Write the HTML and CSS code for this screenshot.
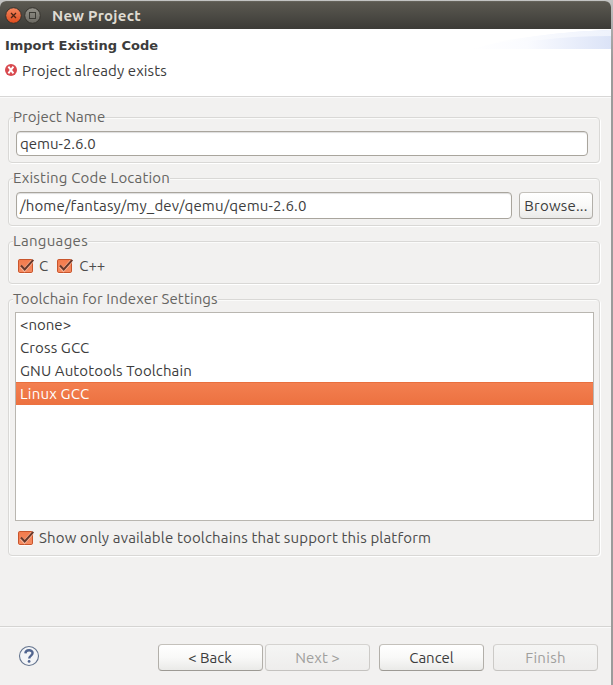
FILE: index.html
```html
<!DOCTYPE html>
<html lang="en">
<head>
<meta charset="utf-8">
<title>New Project</title>
<link rel="stylesheet" href="styles.css">
</head>
<body>
<main class="window">
  <header class="titlebar">
    <svg class="controls" width="36" height="20" viewBox="0 0 36 20">
      <defs>
        <linearGradient id="close" x1="0" y1="0" x2="0" y2="1"><stop offset="0" stop-color="#f58860"/><stop offset="1" stop-color="#df4a1b"/></linearGradient>
        <linearGradient id="max" x1="0" y1="0" x2="0" y2="1"><stop offset="0" stop-color="#94928a"/><stop offset="1" stop-color="#6b6962"/></linearGradient>
      </defs>
      <circle cx="8.5" cy="10.5" r="7.8" fill="url(#close)" stroke="#35332d"/>
      <path d="M6 8l5 5M11 8l-5 5" stroke="#4b2415" stroke-width="1.3"/>
      <circle cx="27.5" cy="10.5" r="7.8" fill="url(#max)" stroke="#35332d"/>
      <rect x="24.5" y="7.5" width="6" height="6" fill="none" stroke="#3b3a34"/>
    </svg>
    <h1 class="title">New Project</h1>
  </header>
  <section class="banner">
    <div>
      <h2 class="heading">Import Existing Code</h2>
      <p class="message">
        <svg class="error" width="12" height="12" viewBox="0 0 12 12"><circle cx="6" cy="6" r="6" fill="#d84a4f"/><path d="M3.4 2.6l5 6.8M8.4 2.6l-5 6.8" stroke="#fff" stroke-width="1.9"/></svg>
        <span class="t-message">Project already exists</span>
      </p>
    </div>
    <svg class="swoosh" width="140" height="20" viewBox="0 0 140 20">
      <defs>
        <linearGradient id="sw"><stop offset="0" stop-color="#fff"/><stop offset=".4" stop-color="#fafbff"/><stop offset="1" stop-color="#dbe3f7"/></linearGradient>
        <linearGradient id="sw2"><stop offset="0" stop-color="#fff"/><stop offset="1" stop-color="#eef2fc"/></linearGradient>
      </defs>
      <path d="M0 20Q60 4 138 1h2v19z" fill="url(#sw)"/>
      <path d="M20 14Q80 3 138 1h2v6Q100 7 70 11z" fill="url(#sw2)"/>
    </svg>
  </section>

  <div class="groups">
    <section class="group name-group">
      <h3 class="legend"><span class="t-name">Project Name</span></h3>
      <div class="field"><span class="t-qemu">qemu-2.6.0</span></div>
    </section>
    <section class="group location-group">
      <h3 class="legend"><span class="t-location">Existing Code Location</span></h3>
      <div class="row">
        <div class="field"><span class="t-path">/home/fantasy/my_dev/qemu/qemu-2.6.0</span></div>
        <button class="button browse"><span class="t-browse">Browse...</span></button>
      </div>
    </section>
    <section class="group language-group">
      <h3 class="legend"><span class="t-lang">Languages</span></h3>
      <div class="checks">
        <label class="check"><svg class="box" width="17" height="17" viewBox="0 0 17 17"><use href="#tick"/></svg><span class="t-c">C</span></label>
        <label class="check"><svg class="box" width="17" height="17" viewBox="0 0 17 17"><use href="#tick"/></svg><span class="t-cpp">C++</span></label>
      </div>
    </section>
    <section class="group toolchain-group">
      <h3 class="legend"><span class="t-tool">Toolchain for Indexer Settings</span></h3>
      <ul class="list">
        <li><span class="t-none">&lt;none&gt;</span></li>
        <li><span class="t-cross">Cross GCC</span></li>
        <li><span class="t-gnu">GNU Autotools Toolchain</span></li>
        <li class="selected"><span class="t-linux">Linux GCC</span></li>
      </ul>
      <label class="check"><svg class="box" width="17" height="17" viewBox="0 0 17 17"><use href="#tick"/></svg><span class="t-show">Show only available toolchains that support this platform</span></label>
    </section>
  </div>

  <footer class="footer">
    <svg class="help" width="22" height="22" viewBox="0 0 22 22">
      <circle cx="11" cy="11" r="9.5" fill="#f4f5f7" stroke="#64748e" stroke-width="1.1"/>
      <path d="M7.4 8.4C7.5 4.3 14.6 4.2 14.6 8.1C14.6 10.6 11.2 10.6 11.2 13.6" fill="none" stroke="#51658f" stroke-width="2.4"/>
      <circle cx="11.1" cy="16.4" r="1.4" fill="#51658f"/>
    </svg>
    <div class="actions">
      <button class="button"><span class="t-back">&lt; Back</span></button>
      <button class="button next" disabled><span class="t-next">Next &gt;</span></button>
      <button class="button cancel"><span class="t-cancel">Cancel</span></button>
      <button class="button" disabled><span class="t-finish">Finish</span></button>
    </div>
  </footer>
</main>
<svg class="symbols" width="0" height="0">
  <defs><linearGradient id="cb" x1="0" y1="0" x2="0" y2="1"><stop offset="0" stop-color="#f37a4c"/><stop offset="1" stop-color="#f58c62"/></linearGradient></defs>
  <symbol id="tick" viewBox="0 0 17 17">
    <rect x="0" y="2" width="14.5" height="14" rx="2" fill="#fff" opacity=".8"/>
    <rect x=".5" y="1.5" width="14" height="13" rx="1.3" fill="url(#cb)" stroke="#c8552c"/>
    <path d="M3.2 8.4l3.3 3.6L14.2 3.2" fill="none" stroke="#f9b79c" stroke-width="3.4"/>
    <path d="M3 7.5l3.7 4L15.3 1.8" fill="none" stroke="#68382a" stroke-width="2"/>
  </symbol>
</svg>
</body>
</html>
```
FILE: styles.css
```css
* { box-sizing: border-box; }
body {
  margin: 0;
  width: 613px;
  height: 685px;
  overflow: hidden;
  padding: 1px 2px 0 0;
  background: linear-gradient(#c3c4c3 0, #aaa 30px, #9b9b9a 60px);
  font: 15px/20px Ubuntu, "Noto Sans", sans-serif;
  color: #3c3c3c;
}
h1, h2, h3, p, ul { margin: 0; padding: 0; font-weight: 400; font-size: inherit; }
span { white-space: nowrap; }
.window {
  width: 611px;
  height: 684px;
  display: flex;
  flex-direction: column;
  background: #f2f1f0;
  border-radius: 6px 6px 0 0;
  overflow: hidden;
}
.titlebar {
  height: 28px;
  display: flex;
  align-items: center;
  gap: 11px;
  padding: 1px 0 0 5px;
  background: linear-gradient(#5b5951, #3c3b37);
  border-top: 1px solid #65635b;
}
.controls { margin-top: -2px; }
.title { font-weight: 700; color: #dfdbd2; letter-spacing: .24px; }
.banner {
  height: 68px;
  display: flex;
  justify-content: space-between;
  background: #fff;
  border-bottom: 1px solid #d8d7d6;
  padding-left: 5px;
}
.heading { font: 700 13px/16px "DejaVu Sans", sans-serif; margin-top: 9px; height: 23px; letter-spacing: -.03px; }
.message { display: flex; align-items: center; gap: 5px; }
.error { margin-top: -2px; }
.groups {
  border-top: 1px solid #fafafa;
  padding: 19px 11px 0 8px;
}
.group {
  border: 1px solid #d9d8d6;
  border-radius: 4px;
  box-shadow: 1px 1px 0 #fff, inset 1px 1px 0 #fbfbfa;
  padding: 0 6px;
}
.legend { height: 20px; margin: -11px 0 4px -2px; color: #666562; }
.legend span { display: inline-block; background: #f2f1f0; }
.name-group { height: 46px; margin-bottom: 15px; padding: 0 11px 0 7px; }
.location-group { height: 48px; margin-bottom: 15px; padding-left: 7px; }
.name-group .legend, .location-group .legend { margin-left: -3px; }
.language-group { height: 43px; margin-bottom: 15px; }
.toolchain-group { height: 257px; }
.row { display: flex; gap: 7px; }
.row .field { width: 496px; height: 27px; line-height: 26px; }
.field {
  height: 25px;
  line-height: 24px;
  padding-left: 3px;
  border: 1px solid #a9a59d;
  border-radius: 4px;
  background: #fff;
  box-shadow: inset 0 1px 1px #ddd;
}
.button {
  width: 105px;
  height: 27px;
  padding: 1px 0 0;
  border: 1px solid;
  border-color: #c4c1bb #b2afa9 #9d9a94;
  border-radius: 4px;
  background: linear-gradient(#fff, #f9f9f8 50%, #eaeae8);
  font: inherit;
  color: #3c3c3c;
  text-align: center;
}
.button:disabled { color: #a09f9d; background: linear-gradient(#f5f5f4, #eeedec); border-color: #d5d3d0 #cccac7 #c4c2bf; }
.browse { width: 74px; }
.checks { display: flex; gap: 9px; }
.check { display: flex; align-items: center; gap: 4px; height: 20px; color: #4c4c4c; }
.check .box { margin: 0 0 0 3px; }
.checks .check { margin-top: 1px; }
.checks .check + .check .box { margin-left: 0; }
.list {
  list-style: none;
  height: 209px;
  margin: 0 -1px 7px 0;
  width: 579px;
  border: 1px solid #b9b6b0;
  background: #fff;
}
.toolchain-group .legend { margin-bottom: 3px; }
.list li { height: 23px; line-height: 24px; padding-left: 4px; }
.list .selected { color: #fff; background: linear-gradient(#f37f50, #ec7140); border-top: 1px solid #e96f3e; line-height: 21px; }
.footer {
  margin-top: auto;
  height: 59px;
  display: flex;
  justify-content: space-between;
  padding: 17px 13px 0 18px;
  border-top: 1px solid #d5d4d2;
  box-shadow: inset 0 1px 0 #fafafa;
}
.help { margin-top: 1px; }
.actions { display: flex; gap: 2px; }
.actions .cancel { margin: 0 7px; }
.symbols { position: absolute; }
.t-message { letter-spacing: .09px; }
.t-name { letter-spacing: .08px; }
.t-location { letter-spacing: .19px; }
.t-path { letter-spacing: .16px; }
.t-browse { letter-spacing: .2px; }
.t-back { margin-right: 1px; }
.t-lang { letter-spacing: .3px; }
.t-tool { letter-spacing: .12px; }
.t-cross, .t-gnu { letter-spacing: .12px; }
.t-linux { letter-spacing: .2px; }
.t-show { letter-spacing: .165px; }
.t-cpp { margin-left: 1px; }
.t-finish { letter-spacing: .3px; }
```
